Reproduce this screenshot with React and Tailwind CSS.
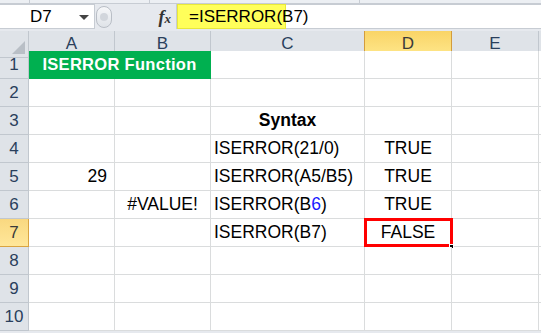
import React from "react";

const cols = ["A", "B", "C", "D", "E"];
const colTpl = "grid grid-cols-[29px_86px_96px_154px_87px_87px_1fr]";

function Cell({ children, className = "" }) {
  return (
    <div className={"h-[28px] border-r border-b border-[#dadcdd] flex items-center bg-white " + className}>
      {children}
    </div>
  );
}

function RowHead({ n, active }) {
  return (
    <div
      className={
        "h-[28px] flex items-center justify-center text-[17px] border-b border-r " +
        (active
          ? "bg-gradient-to-b from-[#f9d880] to-[#ffe79a] border-[#d9a441] text-[#3a3a3a]"
          : "bg-[#dfe3e8] border-[#c1c7ce] text-[#2a3f5c]")
      }
    >
      {n}
    </div>
  );
}

export default function App() {
  const rows = [1, 2, 3, 4, 5, 6, 7, 8, 9, 10];
  return (
    <div className="w-[541px] h-[333px] overflow-hidden bg-[#e6e9ee] font-['Liberation_Sans',sans-serif] text-black relative">
      {/* top ribbon strip */}
      <div className="h-[4px] flex border-b border-[#c7ccd3] bg-[#eceff3]">
        <div className="w-[30px] border-r border-[#c7ccd3]" />
        <div className="w-[120px] border-r border-[#c7ccd3]" />
        <div className="w-[210px] border-r border-[#c7ccd3]" />
      </div>
      {/* formula bar */}
      <div className="h-[25px] flex items-stretch bg-[#e6e9ee]">
        <div className="w-[95px] bg-white border border-[#c7ccd3] border-l-0 flex items-center relative">
          <span className="pl-[30px] text-[17px]">D7</span>
          <div className="absolute left-[79px] top-[10px] w-0 h-0 border-l-[5px] border-r-[5px] border-t-[5px] border-l-transparent border-r-transparent border-t-[#444]" />
        </div>
        <div className="w-[20px] flex items-center">
          <div className="w-[16px] h-[22px] rounded-full border border-[#b9bec6] bg-gradient-to-b from-[#f6f7f9] to-[#dfe3e8] ml-[1px] flex items-center justify-center">
            <div className="w-[8px] h-[8px] rounded-full bg-[#d2d6dc]" />
          </div>
        </div>
        <div className="w-[61px] flex items-center justify-end pr-[5px]">
          <span className="font-['Liberation_Serif',serif] italic font-bold text-[18px] text-[#333] leading-none">
            f<span className="text-[13px]">x</span>
          </span>
        </div>
        <div className="flex-1 flex bg-white border border-[#c7ccd3] border-r-0">
          <div className="w-[109px] bg-[#ffff5a] border border-[#e8e83a] flex items-center pl-[11px] text-[17px] -my-[1px]">
            =ISERROR(B7)
          </div>
        </div>
      </div>
      <div className="h-[2px]" />
      {/* column headers */}
      <div className={colTpl + " h-[20px]"}>
        <div className="border-r border-b border-[#c1c7ce] bg-[#dfe3e8] relative">
          <svg className="absolute right-[3px] bottom-[3px]" width="13" height="13" viewBox="0 0 13 13">
            <polygon points="13,0 13,13 0,13" fill="#b9bfc6" />
          </svg>
        </div>
        {cols.map((c) => (
          <div
            key={c}
            className={
              "border-r border-b flex items-center justify-center text-[17px] " +
              (c === "D"
                ? "bg-gradient-to-b from-[#f9d466] to-[#ffe88c] border-[#d39c3d] border-l text-[#3a3a3a] -ml-[1px]"
                : "bg-[#dfe3e8] border-[#c1c7ce] text-[#2a3f5c]")
            }
          >
            {c}
          </div>
        ))}
        <div className="bg-[#dfe3e8] border-b border-[#c1c7ce]" />
      </div>
      {/* body rows */}
      {rows.map((n) => (
        <div key={n} className={colTpl}>
          <RowHead n={n} active={n === 7} />
          {n === 1 ? (
            <div className="col-span-2 h-[28px] bg-[#00b050] border-b border-r border-[#00b050] flex items-center justify-center text-white font-bold text-[16.5px] tracking-[0.3px]">
              ISERROR Function
            </div>
          ) : (
            <>
              <Cell className="justify-end pr-[7px] text-[17.5px]">{n === 5 ? "29" : ""}</Cell>
              <Cell className="justify-center text-[17.5px]">{n === 6 ? "#VALUE!" : ""}</Cell>
            </>
          )}
          <Cell className={n === 3 ? "justify-center font-bold text-[17.5px]" : "pl-[3px] text-[17.5px]"}>
            {n === 3 && "Syntax"}
            {n === 4 && "ISERROR(21/0)"}
            {n === 5 && "ISERROR(A5/B5)"}
            {n === 6 && (
              <span>
                ISERROR(B<span className="text-[#1a1aff]">6</span>)
              </span>
            )}
            {n === 7 && "ISERROR(B7)"}
          </Cell>
          <Cell className="justify-center text-[17.5px] relative">
            {(n === 4 || n === 5 || n === 6) && "TRUE"}
            {n === 7 && (
              <>
                <span>FALSE</span>
                <div className="absolute -left-[1px] -top-[1px] -right-[2px] -bottom-[1px] border-[3px] border-[#ff0000]" />
                <div className="absolute -right-[3px] -bottom-[3px] w-[5px] h-[5px] bg-black border border-white" />
              </>
            )}
          </Cell>
          <Cell />
          <div className="h-[28px] bg-white border-b border-[#dadcdd]" />
        </div>
      ))}
    </div>
  );
}
